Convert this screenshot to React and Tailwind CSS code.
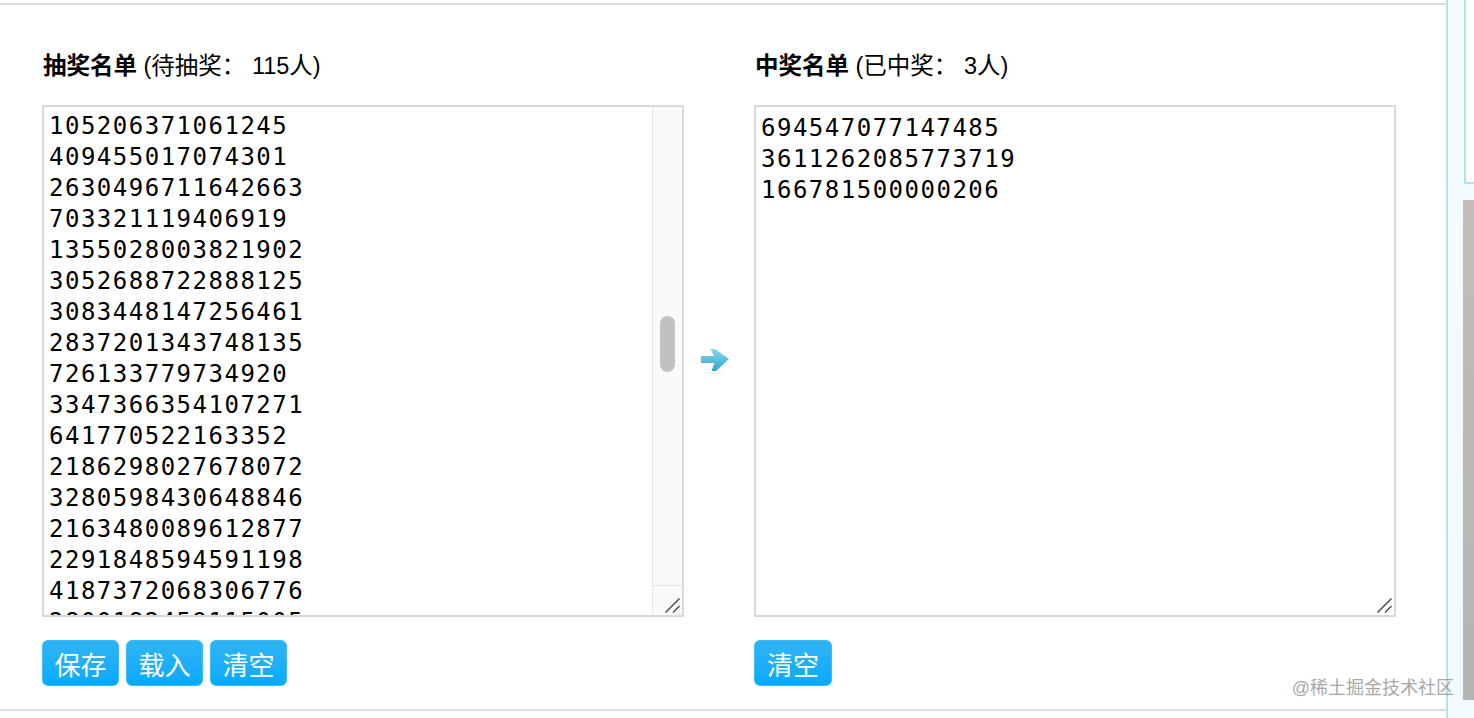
import React from 'react';

const font = { sans: 'font-["Liberation_Sans","Noto_Sans_CJK_SC",sans-serif]' };

const pending = [
   '105206371061245', '409455017074301', '2630496711642663', '703321119406919',
   '1355028003821902', '3052688722888125', '3083448147256461', '2837201343748135',
   '726133779734920', '3347366354107271', '641770522163352', '2186298027678072',
   '3280598430648846', '2163480089612877', '2291848594591198', '4187372068306776',
   '2800182459115005',
];
const winners = ['694547077147485', '3611262085773719', '166781500000206'];

function ResizeGrip() {
   return (
      <svg className="absolute bottom-[1px] right-[1px]" width="17" height="17" viewBox="0 0 17 17">
         <path d="M1.5 15.5 L15.5 1.5 M9 15.5 L15.5 9" stroke="#555" strokeWidth="1.6" fill="none" />
      </svg>
   );
}

function BlueButton({ children, wide }) {
   return (
      <button className={`${wide ? 'w-[78px]' : 'w-[77px]'} h-[46px] rounded-[6px] border border-[#3dbcf5] bg-gradient-to-b from-[#2fb4f3] to-[#02a9ff] pt-[5px] text-white text-[26px] leading-[38px] ${font.sans}`}>
         {children}
      </button>
   );
}

function ListBox({ lines, scroll, top }) {
   return (
      <div className="relative flex h-[512px] w-[642px] overflow-hidden border-2 border-[#d9d9d9] bg-white">
         <div className={`flex-1 overflow-hidden pl-[5px] ${top} font-["DejaVu_Sans_Mono",monospace] text-[24px] tracking-[1.5px] leading-[31px] text-black`}>
            {lines.map((line) => (
               <div key={line} className="h-[31px] whitespace-nowrap">{line}</div>
            ))}
         </div>
         {scroll && (
            <div className="flex w-[30px] flex-col border-l border-[#e6e6e6] bg-[#fafafa]">
               <div className="flex-1 px-[7px] pt-[209px]">
                  <div className="h-[56px] rounded-full bg-[#c1c1c1]"></div>
               </div>
               <div className="h-[30px] border-t border-[#e0e0e0]"></div>
            </div>
         )}
         <ResizeGrip />
      </div>
   );
}

function Column({ title, note, children }) {
   return (
      <div>
         <h3 className={`h-[57px] pl-px pt-px text-[23.5px] leading-[34px] whitespace-nowrap text-black ${font.sans}`}>
            <b>{title}</b> {note}
         </h3>
         {children}
      </div>
   );
}

export default function App() {
   return (
      <div className="relative flex h-[718px] w-[1474px] overflow-hidden bg-white">
         <div className="w-[1446px] pt-[3px]">
            <div className="h-[708px] border-y-2 border-[#dcdcdc] pl-[42px] pt-[43px]">
               <div className="flex items-start">
                  <Column title="抽奖名单" note="(待抽奖： 115人)">
                     <ListBox lines={pending} scroll top="pt-[4px]" />
                     <div className="mt-[23px] flex gap-[7px]">
                        <BlueButton>保存</BlueButton>
                        <BlueButton>载入</BlueButton>
                        <BlueButton>清空</BlueButton>
                     </div>
                  </Column>

                  <div className="flex w-[70px] justify-center pt-[298px] pr-[8px]">
                     <svg width="32" height="30" viewBox="0 0 32 30">
                        <defs>
                           <linearGradient id="arrowFill" x1="0" y1="0" x2="0" y2="1">
                              <stop offset="0" stopColor="#8ad6ea" />
                              <stop offset="1" stopColor="#2ba6cf" />
                           </linearGradient>
                        </defs>
                        <ellipse cx="15" cy="27" rx="9" ry="1.5" fill="#eef3f4" />
                        <path d="M2 10 H15 L11.5 3 H16 L30 13 L17 25 H12.5 L15.5 17 H2 Z" fill="url(#arrowFill)" />
                     </svg>
                  </div>

                  <Column title="中奖名单" note="(已中奖： 3人)">
                     <ListBox lines={winners} top="pt-[6px]" />
                     <div className="mt-[23px]">
                        <BlueButton wide>清空</BlueButton>
                     </div>
                  </Column>
               </div>
            </div>
         </div>

         {/* Right sidebar sliver */}
         <div className="flex w-[28px] flex-col border-l-2 border-[#b9dfec] bg-[#f0faff]">
            <div className="ml-[16px] h-[184px] border-b-2 border-l-2 border-[#b9dfec] bg-white"></div>
            <div className="ml-[15px] mt-[16px] h-[500px] bg-gradient-to-b from-[#c4bcbc] to-[#b4b4b4]"></div>
         </div>

         {/* Watermark */}
         <div className={`absolute bottom-[18px] right-[20px] text-[18px] leading-[24px] text-[#8f8f8f]/80 ${font.sans}`}>
            @稀土掘金技术社区
         </div>
      </div>
   );
}
